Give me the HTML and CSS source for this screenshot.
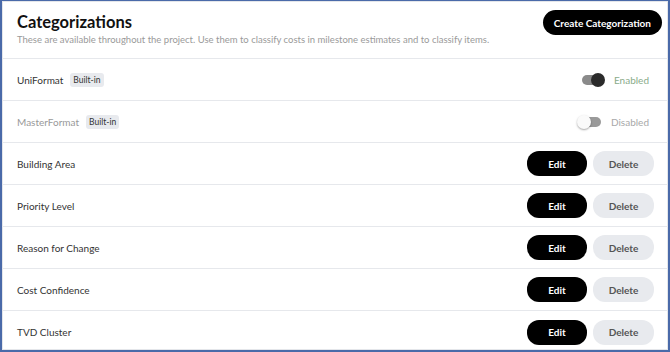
FILE: index.html
```html
<!DOCTYPE html>
<html lang="en">
<head>
  <meta charset="UTF-8" />
  <title>Categorizations</title>
  <link rel="stylesheet" href="styles.css">
</head>
<body>
  <div class="frame">
    <div class="header">
      <div>
        <h1>Categorizations</h1>
        <p class="sub">These are available throughout the project. Use them to classify costs in milestone estimates and to classify items.</p>
      </div>
      <button class="btn-create">Create Categorization</button>
    </div>

    <div class="row">
      <div class="name">UniFormat <span class="badge">Built-in</span></div>
      <div class="toggle-wrap">
        <span class="toggle on"><span class="knob"></span></span>
        <span class="state enabled">Enabled</span>
      </div>
    </div>
    <div class="row">
      <div class="name muted">MasterFormat <span class="badge">Built-in</span></div>
      <div class="toggle-wrap">
        <span class="toggle off"><span class="knob"></span></span>
        <span class="state disabled">Disabled</span>
      </div>
    </div>
    <div class="row">
      <div class="name">Building Area</div>
      <div class="actions"><button class="btn-edit">Edit</button><button class="btn-delete">Delete</button></div>
    </div>
    <div class="row">
      <div class="name">Priority Level</div>
      <div class="actions"><button class="btn-edit">Edit</button><button class="btn-delete">Delete</button></div>
    </div>
    <div class="row">
      <div class="name">Reason for Change</div>
      <div class="actions"><button class="btn-edit">Edit</button><button class="btn-delete">Delete</button></div>
    </div>
    <div class="row">
      <div class="name">Cost Confidence</div>
      <div class="actions"><button class="btn-edit">Edit</button><button class="btn-delete">Delete</button></div>
    </div>
    <div class="row last">
      <div class="name">TVD Cluster</div>
      <div class="actions"><button class="btn-edit">Edit</button><button class="btn-delete">Delete</button></div>
    </div>
  </div>
</body>
</html>
```

FILE: styles.css
```css
* { box-sizing: border-box; margin: 0; padding: 0; }
body {
  background: #fff;
  color: #222;
  font-family: Lato, "Noto Sans", sans-serif;
}
.frame {
  width: 670px;
  height: 352px;
  border: 2px solid #4a6aa9;
  border-top-width: 1px;
  box-shadow: inset 0 0 0 1px #e4e6ea;
  overflow: hidden;
}
.header {
  display: flex;
  justify-content: space-between;
  align-items: flex-start;
  padding: 9px 6px 0 15px;
  height: 58px;
  border-bottom: 1px solid #e6e8ec;
}
h1 {
  font-size: 16.5px;
  font-weight: 700;
  line-height: 24px;
  color: #111;
}
.sub {
  font-size: 9.5px;
  color: #9a9a9a;
  line-height: 12px;
}
.btn-create {
  flex-shrink: 0;
  white-space: nowrap;
  height: 25px;
  padding: 0 11px;
  border: none;
  border-radius: 13px;
  background: #000;
  color: #fff;
  font-family: inherit;
  font-size: 10px;
  font-weight: 700;
}
.row {
  display: flex;
  justify-content: space-between;
  align-items: center;
  height: 42px;
  padding: 0 14px 0 15px;
  border-bottom: 1px solid #e6e8ec;
}
.row.last { border-bottom: none; }
.name {
  font-size: 10px;
  color: #333;
  display: flex;
  align-items: center;
  gap: 7px;
}
.name.muted { color: #999; }
.badge {
  font-size: 8.5px;
  color: #333;
  background: #e8eaee;
  border-radius: 3px;
  padding: 2px 3px;
}
.toggle-wrap {
  display: flex;
  align-items: center;
  gap: 10px;
  padding-right: 5px;
}
.toggle {
  position: relative;
  width: 22px;
  height: 10px;
  border-radius: 5px;
  background: #8a8a8a;
}
.toggle .knob {
  position: absolute;
  top: -2px;
  width: 14px;
  height: 14px;
  border-radius: 50%;
}
.toggle.on .knob { right: -1px; background: #2b2b2b; }
.toggle.off { background: #9a9a9a; }
.toggle.off .knob {
  left: -2px;
  background: #fafafa;
  box-shadow: 0 1px 2px rgba(0,0,0,0.35);
}
.state { font-size: 10px; }
.state.enabled { color: #8aab8a; }
.state.disabled { color: #a8a8a8; }
.actions {
  display: flex;
  gap: 6px;
}
.actions button {
  height: 25px;
  border: none;
  border-radius: 12px;
  font-family: inherit;
  font-size: 10px;
  font-weight: 700;
}
.btn-edit {
  width: 60px;
  background: #000;
  color: #fff;
}
.btn-delete {
  width: 61px;
  background: #e8eaee;
  color: #555;
}
```
